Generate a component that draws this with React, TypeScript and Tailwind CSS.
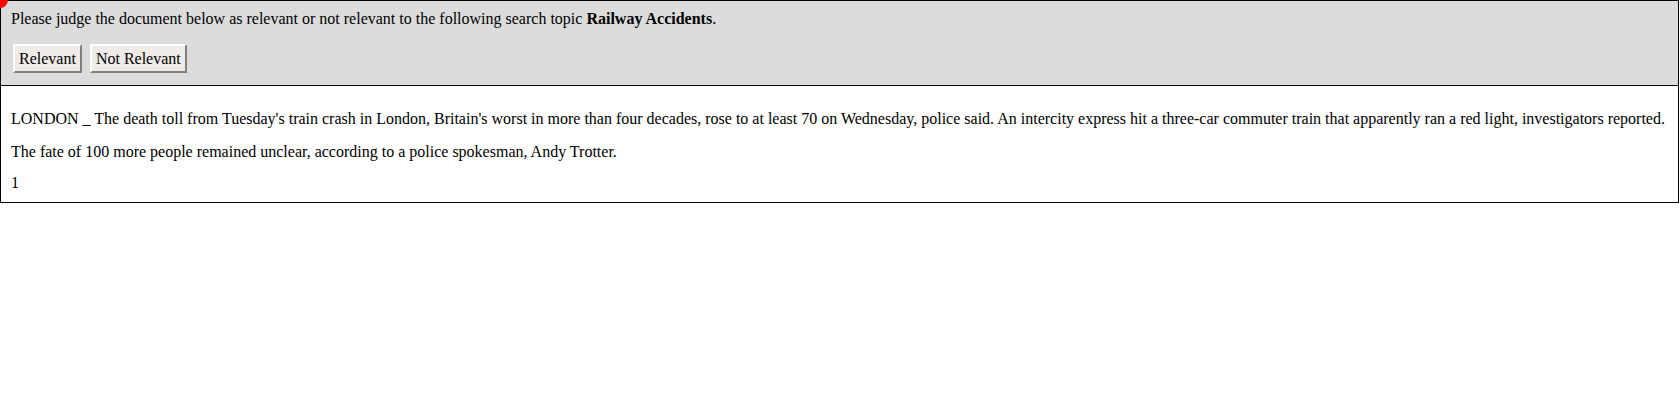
import React from 'react';

const Btn: React.FC<{ label: string }> = ({ label }) => (
  <button className="h-[29px] px-[4px] bg-[#efebe7] text-black border-2 border-t-[#ffffff] border-l-[#ffffff] border-b-[#808080] border-r-[#808080] leading-none">
    {label}
  </button>
);

export default function App() {
  return (
    <div className="relative w-[1679px] text-[16px] text-black font-['Liberation_Serif',serif] overflow-hidden">
      <div className="absolute -left-[8px] -top-[8px] w-[16px] h-[16px] rounded-full bg-[#ff0000]" />
      <div className="border border-black">
        <div className="bg-[#dcdcdc] px-[10px] pt-[9px] pb-[12px] border-b border-black">
          <p className="leading-[18px]">
            Please judge the document below as relevant or not relevant to the following search topic <b>Railway Accidents</b>.
          </p>
          <div className="flex gap-[8px] mt-[16px] pl-[2px]">
            <Btn label="Relevant" />
            <Btn label="Not Relevant" />
          </div>
        </div>
        <div className="px-[10px] pt-[24px] pb-[10px] leading-[18px]">
          <p>
            LONDON _ The death toll from Tuesday's train crash in London, Britain's worst in more than four decades, rose to at least 70 on Wednesday, police said. An intercity express hit a three-car commuter train that apparently ran a red light, investigators reported.
          </p>
          <p className="mt-[15px]">The fate of 100 more people remained unclear, according to a police spokesman, Andy Trotter.</p>
          <p className="mt-[13px]">1</p>
        </div>
      </div>
    </div>
  );
}
